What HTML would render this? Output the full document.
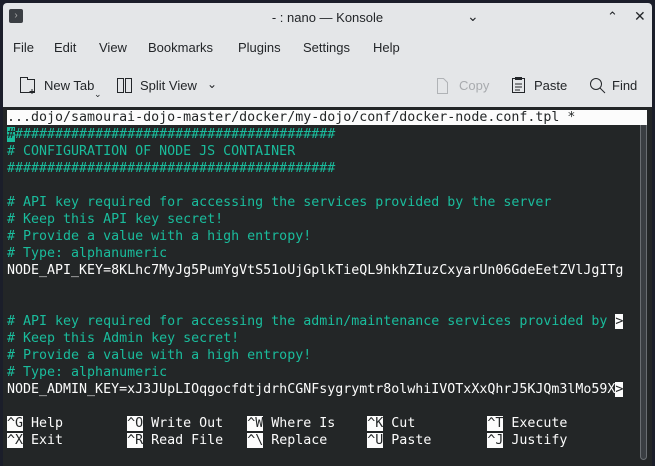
<!DOCTYPE html>
<html><head><style>
*{margin:0;padding:0;box-sizing:border-box}
body{width:655px;height:466px;background:#1b1e2a;position:relative;overflow:hidden;font-family:"Liberation Sans","DejaVu Sans",sans-serif}
.win{position:absolute;left:3px;top:3px;width:649px;height:463px;background:#e4e6e8;border-radius:4px 4px 0 0}
.t{position:absolute;font-size:13px;color:#232629;top:0}
.term{position:absolute;left:3px;top:107px;width:649px;height:359px;background:#232627}
pre{position:absolute;left:7px;top:109px;font-family:"DejaVu Sans Mono","Liberation Mono",monospace;font-size:13.3px;line-height:17px;color:#fcfcfc;white-space:pre}
.c{color:#1abc9c}
.w{background:#fcfcfc;color:#232627}
.sb{position:absolute;left:640px;top:114px;width:7px;height:346px;border:1px solid #6a6e72;border-radius:4px;background:#3a3e42}
</style></head><body>
<div class="win">
<div style="position:absolute;left:6px;top:6px;width:14px;height:14px;background:#3b3f44;border-radius:2px;color:#aaa;font-size:10px;line-height:14px;text-align:center">›</div>
<div class="t" style="left:0;width:649px;text-align:center;top:7px;font-size:13px">- : nano — Konsole</div>
<div class="t" style="left:464px;top:5px;font-size:14px">⌄</div>
<div class="t" style="left:604px;top:6px;font-size:13px">⌃</div>
<div class="t" style="left:631px;top:5px;font-size:14px">✕</div>
<div class="t" style="left:10px;top:37px">File</div>
<div class="t" style="left:51px;top:37px">Edit</div>
<div class="t" style="left:96px;top:37px">View</div>
<div class="t" style="left:145px;top:37px">Bookmarks</div>
<div class="t" style="left:235px;top:37px">Plugins</div>
<div class="t" style="left:300px;top:37px">Settings</div>
<div class="t" style="left:370px;top:37px">Help</div>
<svg style="position:absolute;left:16px;top:73px" width="18" height="18"><path d="M1.5 1.5h7v2h7v13h-14z" fill="none" stroke="#232629"/><path d="M13 13v5M10.5 15.5h5" stroke="#232629"/></svg>
<div class="t" style="left:41px;top:75px">New Tab</div>
<div class="t" style="left:91px;top:86px;font-size:9px">⌄</div>
<svg style="position:absolute;left:113px;top:74px" width="18" height="17"><rect x="1.5" y="1.5" width="6" height="14" fill="none" stroke="#232629"/><rect x="9.5" y="1.5" width="6" height="14" fill="none" stroke="#232629"/></svg>
<div class="t" style="left:137px;top:75px">Split View</div>
<div class="t" style="left:204px;top:74px;font-size:12px">⌄</div>
<svg style="position:absolute;left:432px;top:74px" width="16" height="18"><path d="M2.5 1.5h6l4 4v11h-10z" fill="none" stroke="#b0b3b6"/></svg>
<div class="t" style="left:456px;top:75px;color:#a8abae">Copy</div>
<svg style="position:absolute;left:508px;top:73px" width="16" height="18"><rect x="1.5" y="2.5" width="12" height="14" fill="none" stroke="#232629"/><rect x="4" y="1" width="7" height="3" fill="#232629"/><path d="M4 8h7M4 11h7M4 14h5" stroke="#232629"/></svg>
<div class="t" style="left:531px;top:75px">Paste</div>
<svg style="position:absolute;left:586px;top:74px" width="18" height="18"><circle cx="7" cy="7" r="5.5" fill="none" stroke="#232629"/><path d="M11 11l5 5" stroke="#232629"/></svg>
<div class="t" style="left:609px;top:75px">Find</div>
</div>
<div class="term"></div>
<div class="sb"></div>
<pre><span class="w">...dojo/samourai-dojo-master/docker/my-dojo/conf/docker-node.conf.tpl *         </span>
<span class="c"><span style="background:#1abc9c;color:#232627">#</span>########################################
# CONFIGURATION OF NODE JS CONTAINER
#########################################

# API key required for accessing the services provided by the server
# Keep this API key secret!
# Provide a value with a high entropy!
# Type: alphanumeric</span>
NODE_API_KEY=8KLhc7MyJg5PumYgVtS51oUjGplkTieQL9hkhZIuzCxyarUn06GdeEetZVlJgITg


<span class="c"># API key required for accessing the admin/maintenance services provided by </span><span class="w">&gt;</span>
<span class="c"># Keep this Admin key secret!
# Provide a value with a high entropy!
# Type: alphanumeric</span>
NODE_ADMIN_KEY=xJ3JUpLIOqgocfdtjdrhCGNFsygrymtr8olwhiIVOTxXxQhrJ5KJQm3lMo59X<span class="w">&gt;</span>

<span class="w">^G</span> Help        <span class="w">^O</span> Write Out   <span class="w">^W</span> Where Is    <span class="w">^K</span> Cut         <span class="w">^T</span> Execute
<span class="w">^X</span> Exit        <span class="w">^R</span> Read File   <span class="w">^\</span> Replace     <span class="w">^U</span> Paste       <span class="w">^J</span> Justify</pre>
</body></html>
